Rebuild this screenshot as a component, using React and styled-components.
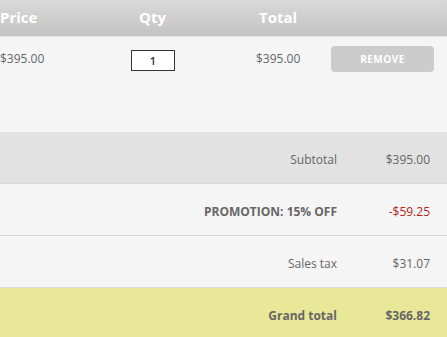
import React from "react";
import styled, { createGlobalStyle } from "styled-components";

const GlobalStyle = createGlobalStyle`
  body {
    margin: 0;
    background: #f5f5f5;
    font-family: "Open Sans", "DejaVu Sans", sans-serif;
  }
`;

const summary = [
  { label: "Subtotal", value: "$395.00", tone: "shade" },
  { label: "PROMOTION: 15% OFF", value: "-$59.25", tone: "plain", strongLabel: true, red: true },
  { label: "Sales tax", value: "$31.07", tone: "plain" },
  { label: "Grand total", value: "$366.82", tone: "total", strongLabel: true, strongValue: true },
];

const Cart = () => {
  return (
    <Container>
      <GlobalStyle />
      <Header>
        <HeadCell>Price</HeadCell>
        <HeadCell $pad={8}>Qty</HeadCell>
        <HeadCell $pad={3}>Total</HeadCell>
        <HeadCell />
      </Header>
      <ItemRow>
        <Cell>$395.00</Cell>
        <Cell>
          <QtyInput type="text" defaultValue="1" />
        </Cell>
        <Cell>$395.00</Cell>
        <Cell>
          <RemoveButton>Remove</RemoveButton>
        </Cell>
      </ItemRow>
      {summary.map((row) => (
        <SummaryRow key={row.label} $tone={row.tone}>
          <Label $strong={row.strongLabel}>{row.label}</Label>
          <Value $strong={row.strongValue} $red={row.red}>
            {row.value}
          </Value>
        </SummaryRow>
      ))}
    </Container>
  );
};

const Container = styled.div`
  width: 447px;
  height: 337px;
  overflow: hidden;
  background: #f5f5f5;
`;

const columns = "131px 125px 75px 1fr";

const Header = styled.div`
  display: grid;
  grid-template-columns: ${columns};
  align-items: center;
  height: 36px;
  background: linear-gradient(#d9d9d9, #c3c3c3);
  border-bottom: 1px solid #e0e0e0;
`;

const HeadCell = styled.div`
  padding-left: ${(p) => p.$pad || 0}px;
  color: #fff;
  font-size: 15px;
  font-weight: 700;
  margin-top: -2px;
`;

const ItemRow = styled.div`
  display: grid;
  grid-template-columns: ${columns};
  align-items: start;
  height: 95px;
  padding-top: 9px;
  box-sizing: border-box;
`;

const Cell = styled.div`
  color: #666;
  font-size: 12px;
  line-height: 26px;
  display: flex;
  align-items: center;
  height: 26px;
`;

const QtyInput = styled.input`
  width: 44px;
  height: 21px;
  box-sizing: border-box;
  border: 1px solid #333;
  background: #fff;
  text-align: center;
  font-family: "Open Sans", sans-serif;
  font-size: 11px;
  font-weight: 600;
  color: #333;
  padding: 0;
  margin-top: 2px;
`;

const RemoveButton = styled.button`
  width: 103px;
  height: 26px;
  border: none;
  border-radius: 4px;
  background: #cccccc;
  color: #fff;
  font-family: "Open Sans", sans-serif;
  font-size: 10px;
  font-weight: 700;
  letter-spacing: 0.5px;
  text-transform: uppercase;
  padding: 0;
`;

const tones = {
  shade: "#e2e2e2",
  plain: "#f5f5f5",
  total: "#e9e899",
};

const SummaryRow = styled.div`
  display: grid;
  grid-template-columns: 1fr 110px;
  align-items: center;
  height: 52px;
  padding-top: 3px;
  box-sizing: border-box;
  background: ${(p) => tones[p.$tone]};
  border-bottom: 1px solid ${(p) => (p.$tone === "total" ? "transparent" : "#dadada")};
`;

const Label = styled.div`
  text-align: right;
  color: #666;
  font-size: 12px;
  font-weight: ${(p) => (p.$strong ? 700 : 400)};
`;

const Value = styled.div`
  text-align: right;
  padding-right: 17px;
  color: ${(p) => (p.$red ? "#b81c1c" : "#666")};
  font-size: 12px;
  font-weight: ${(p) => (p.$strong ? 700 : 400)};
`;

export default Cart;
